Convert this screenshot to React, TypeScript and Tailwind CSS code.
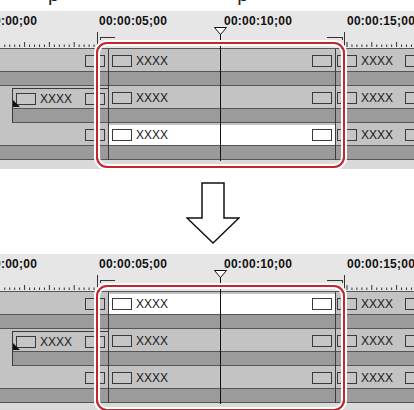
const FONT = "font-['Liberation_Sans',Arial,sans-serif]";

// ruler ticks, 5 frames apart, every 5th one longer
const TICKS: { x: number; tall: boolean }[] = [];
for (let k = -20; k < 64; k++) {
    const x = 99 + k * 4.96;
    if (x < 0 || x > 414) continue;
    if (x > 95 && x < 347) continue;
    TICKS.push({ x, tall: k % 5 === 0 });
}

function Box({ white }: { white?: boolean }) {
    return (
        <div
            className={
                "h-[12px] w-[20px] shrink-0 border border-[#3a3a3a] " + (white ? "bg-white" : "bg-[#c6c6c6]")
            }
        />
    );
}

function Label() {
    return <span className="text-[12px] leading-[12px] text-[#1a1a1a]">XXXX</span>;
}

function Lower() {
    return <div className="h-[15px] border-y border-[#555] bg-[#9b9b9b]" />;
}

function LeftClip({ outlined }: { outlined?: boolean }) {
    if (!outlined) {
        return (
            <div className="flex w-[108px] shrink-0 flex-col">
                <div className="flex h-[22px] items-center justify-end bg-[#c3c3c3] pr-[3px] pt-[2px]">
                    <Box />
                </div>
                <Lower />
            </div>
        );
    }
    return (
        <div className="flex w-[108px] shrink-0 bg-[#c3c3c3]">
            <div className="w-[12px] shrink-0" />
            <div className="flex flex-1 flex-col pt-[2px]">
                <div className="relative flex h-[20px] items-center gap-[4px] border-l border-t border-[#3a3a3a] pl-[3px] pr-[3px]">
                    <Box />
                    <Label />
                    <div className="ml-auto">
                        <Box />
                    </div>
                    <svg className="absolute left-0 bottom-0" width="8" height="8" viewBox="0 0 8 8">
                        <polygon points="0,0 0,7 7,7" fill="#111" />
                    </svg>
                </div>
                <div className="border-l border-[#3a3a3a]">
                    <Lower />
                </div>
            </div>
        </div>
    );
}

function Track({ selected, outlined }: { selected?: boolean; outlined?: boolean }) {
    return (
        <div className="flex">
            <LeftClip outlined={outlined} />

            <div className="flex w-[227px] shrink-0 flex-col border-l border-[#3c3c3c]">
                <div className="h-[22px] bg-[#c3c3c3] pt-[2px]">
                    <div
                        className={
                            "flex h-full items-center gap-[4px] px-[3px] " + (selected ? "bg-white" : "bg-[#c3c3c3]")
                        }
                    >
                        <Box white={selected} />
                        <Label />
                        <div className="ml-auto">
                            <Box white={selected} />
                        </div>
                    </div>
                </div>
                <Lower />
            </div>

            <div className="flex flex-1 flex-col border-l border-[#3c3c3c]">
                <div className="flex h-[22px] items-center gap-[4px] bg-[#c3c3c3] pl-[1px] pt-[2px]">
                    <Box />
                    <Label />
                    <div className="ml-[8px]">
                        <Box />
                    </div>
                </div>
                <Lower />
            </div>
        </div>
    );
}

function Timeline({ selected }: { selected: number }) {
    return (
        <div className="relative w-[414px] overflow-hidden">
            <div className="flex h-[38px] flex-col justify-between border-b border-[#555] bg-[#e6e6e6] pt-[3px]">
                <div className="-ml-[31px] flex text-[12px] leading-[14px] font-bold tracking-[0.25px] text-[#111]">
                    <span className="w-[130px] shrink-0">00:00:00;00</span>
                    <span className="w-[125px] shrink-0">00:00:05;00</span>
                    <span className="w-[123px] shrink-0">00:00:10;00</span>
                    <span className="w-[123px] shrink-0">00:00:15;00</span>
                </div>
                <svg width="414" height="8" className="shrink-0">
                    {TICKS.map((t, i) => (
                        <line
                            key={i}
                            x1={t.x}
                            x2={t.x}
                            y1={t.tall ? 2 : 4.5}
                            y2={7}
                            stroke="#333"
                            strokeWidth="1"
                        />
                    ))}
                </svg>
            </div>

            <Track selected={selected === 0} />
            <Track outlined />
            <Track selected={selected === 2} />
            <div className="h-[9px] bg-[#dadada]" />

            {/* in / out points */}
            <div className="absolute left-[97px] top-[21px] h-[17px] w-px bg-[#333]" />
            <div className="absolute left-[100px] top-[26px] h-[3px] w-[15px] border-l border-t border-[#333]" />
            <div className="absolute left-[327px] top-[26px] h-[3px] w-[16px] border-r border-t border-[#333]" />
            <div className="absolute left-[344px] top-[21px] h-[17px] w-px bg-[#333]" />

            {/* playhead */}
            <svg className="absolute left-[214px] top-[16px]" width="13" height="8" viewBox="0 0 13 8">
                <polygon points="0.5,0.5 12.5,0.5 6.5,7.5" fill="white" stroke="#111" strokeWidth="1" />
            </svg>
            <div className="absolute left-[220px] top-[23px] h-[127px] w-px bg-[#111]" />

            {/* highlight */}
            <div className="absolute left-[96px] top-[31px] h-[126px] w-[249px] rounded-[11px] border-2 border-[#c4262e] shadow-[0_0_0_2px_white,inset_0_0_0_2px_white]" />
        </div>
    );
}

export default function App() {
    return (
        <div className={"h-[410px] w-[414px] overflow-hidden bg-white " + FONT}>
            <div className="flex h-[11px] overflow-hidden">
                <div className="-mt-[16px] flex text-[20px] leading-[20px] text-[#222]">
                    <span className="ml-[48px]">p</span>
                    <span className="ml-[178px]">p</span>
                </div>
            </div>

            <Timeline selected={2} />

            <div className="h-[85px] pl-[186px] pt-[13px]">
                <svg width="54" height="63" viewBox="0 0 54 63">
                    <polygon
                        points="16,1 38,1 38,36 53,36 27,61 1,36 16,36"
                        fill="white"
                        stroke="#111"
                        strokeWidth="1.5"
                    />
                </svg>
            </div>

            <Timeline selected={0} />
        </div>
    );
}
